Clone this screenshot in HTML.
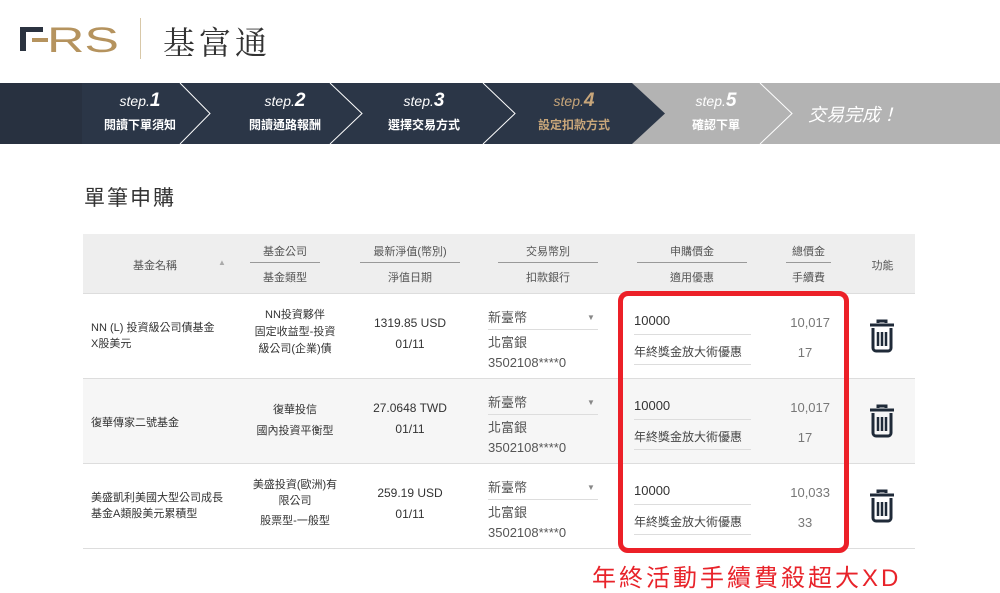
<!DOCTYPE html>
<html><head><meta charset="utf-8"><style>
*{margin:0;padding:0;box-sizing:border-box}
body{width:1000px;height:589px;background:#fff;font-family:"Liberation Sans","Noto Sans CJK TC",sans-serif;position:relative;overflow:hidden;color:#333}
.a{position:absolute}
.c{text-align:center}
.hd{font-size:11px;color:#555}
.cell{font-size:12px;color:#333}
.ln{position:absolute;height:1px;background:#999}
.st{position:absolute;top:90px;text-align:center;color:#fff}
.st i{font-family:"Liberation Sans",sans-serif;font-size:14px;display:block;line-height:22px}
.st i b{font-size:19px}
.st span{font-size:12px;font-weight:bold;display:block;line-height:26px}
</style></head><body>
<!-- logo -->
<svg class="a" style="left:18px;top:22px" width="105" height="34" viewBox="0 0 105 34">
<path d="M2 5h23v5H8v19H2z" fill="#2b3340"/>
<rect x="14" y="16" width="16" height="4" fill="#b5935e"/>
<text x="29" y="30" font-family="Liberation Sans" font-size="35" fill="#b5935e" textLength="72" lengthAdjust="spacingAndGlyphs">RS</text>
</svg>
<div class="a" style="left:140px;top:18px;width:1px;height:41px;background:#d8c8a8"></div>
<div class="a" style="left:163px;top:18px;font-size:32px;color:#333;font-family:'Liberation Serif','Noto Serif CJK SC',serif;letter-spacing:4px">基富通</div>
<!-- steps -->
<div class="a" style="left:0;top:83px;width:1000px;height:61px;background:#b3b3b3"></div>
<div class="a" style="left:0;top:83px;width:82px;height:61px;background:#283140"></div>
<svg class="a" style="left:0;top:83px" width="1000" height="61">
<polygon points="82,0 632,0 665,30.5 632,61 82,61" fill="#2b3647"/>
<polyline points="180,0 210,30.5 180,61" fill="none" stroke="#fff" stroke-width="1"/>
<polyline points="330,0 362,30.5 330,61" fill="none" stroke="#fff" stroke-width="1"/>
<polyline points="483,0 515,30.5 483,61" fill="none" stroke="#fff" stroke-width="1"/>
<polyline points="760,0 792,30.5 760,61" fill="none" stroke="#fff" stroke-width="1"/>
</svg>
<div class="st" style="left:65px;width:150px"><i>step.<b>1</b></i><span>閱讀下單須知</span></div>
<div class="st" style="left:210px;width:150px"><i>step.<b>2</b></i><span>閱讀通路報酬</span></div>
<div class="st" style="left:349px;width:150px"><i>step.<b>3</b></i><span>選擇交易方式</span></div>
<div class="st" style="left:499px;width:150px;color:#c8a67a"><i>step.<b>4</b></i><span>設定扣款方式</span></div>
<div class="st" style="left:641px;width:150px"><i>step.<b>5</b></i><span>確認下單</span></div>
<div class="a" style="left:808px;top:101px;font-size:18px;color:#fff;font-style:italic">交易完成！</div>
<!-- title -->
<div class="a" style="left:84px;top:182px;font-size:21px;color:#333;letter-spacing:2px">單筆申購</div>
<!-- table -->
<div class="a" style="left:83px;top:234px;width:832px;height:59px;background:#eee"></div>
<div class="a" style="left:83px;top:378px;width:832px;height:85px;background:#f6f6f6"></div>
<div class="a" style="left:83px;top:293px;width:832px;height:1px;background:#ddd"></div>
<div class="a" style="left:83px;top:378px;width:832px;height:1px;background:#ddd"></div>
<div class="a" style="left:83px;top:463px;width:832px;height:1px;background:#ddd"></div>
<div class="a" style="left:83px;top:548px;width:832px;height:1px;background:#ddd"></div>
<div class="a hd" style="left:133px;top:257px">基金名稱</div>
<div class="a" style="left:218px;top:258px;font-size:8px;color:#aaa">▲</div>
<div class="a hd c" style="left:250px;top:243px;width:70px">基金公司</div>
<div class="ln" style="top:262px;width:70px;left:250px"></div>
<div class="a hd c" style="left:250px;top:269px;width:70px">基金類型</div>
<div class="a hd c" style="left:360px;top:243px;width:100px">最新淨值(幣別)</div>
<div class="ln" style="left:360px;top:262px;width:100px"></div>
<div class="a hd c" style="left:360px;top:269px;width:100px">淨值日期</div>
<div class="a hd c" style="left:498px;top:243px;width:100px">交易幣別</div>
<div class="ln" style="left:498px;top:262px;width:100px"></div>
<div class="a hd c" style="left:498px;top:269px;width:100px">扣款銀行</div>
<div class="a hd c" style="left:637px;top:243px;width:110px">申購價金</div>
<div class="ln" style="left:637px;top:262px;width:110px"></div>
<div class="a hd c" style="left:637px;top:269px;width:110px">適用優惠</div>
<div class="a hd c" style="left:786px;top:243px;width:45px">總價金</div>
<div class="ln" style="left:786px;top:262px;width:45px"></div>
<div class="a hd c" style="left:786px;top:269px;width:45px">手續費</div>
<div class="a hd c" style="left:860px;top:257px;width:45px">功能</div>

<!-- rows -->
<div class="a cell" style="left:91px;top:320px;width:124px;font-size:11px;line-height:16px">NN (L) 投資級公司債基金X股美元</div>
<div class="a cell c" style="left:240px;top:306px;width:110px;font-size:11px;line-height:18px">NN投資夥伴<br><span style="line-height:17px;display:block">固定收益型-投資<br>級公司(企業)債</span></div>
<div class="a cell c" style="left:360px;top:313px;width:100px;line-height:21px">1319.85 USD<br>01/11</div>

<div class="a cell" style="left:91px;top:414px;font-size:11px">復華傳家二號基金</div>
<div class="a cell c" style="left:240px;top:400px;width:110px;font-size:11px;line-height:21px">復華投信<br>國內投資平衡型</div>
<div class="a cell c" style="left:360px;top:398px;width:100px;line-height:21px">27.0648 TWD<br>01/11</div>

<div class="a cell" style="left:91px;top:490px;width:133px;font-size:11px;line-height:16px">美盛凱利美國大型公司成長基金A類股美元累積型</div>
<div class="a cell c" style="left:240px;top:477px;width:110px;font-size:11px;line-height:16px">美盛投資(歐洲)有<br>限公司<br><span style="line-height:24px">股票型-一般型</span></div>
<div class="a cell c" style="left:360px;top:483px;width:100px;line-height:21px">259.19 USD<br>01/11</div>

<!-- currency/bank -->
<div class="a" style="left:488px;top:307px;font-size:13px;color:#555">新臺幣</div>
<div class="a" style="left:587px;top:313px;font-size:8px;color:#888">▼</div>
<div class="a" style="left:488px;top:329px;width:110px;height:1px;background:#ddd"></div>
<div class="a" style="left:488px;top:333px;font-size:13px;color:#555;line-height:20px">北富銀<br>3502108****0</div>
<div class="a" style="left:488px;top:392px;font-size:13px;color:#555">新臺幣</div>
<div class="a" style="left:587px;top:398px;font-size:8px;color:#888">▼</div>
<div class="a" style="left:488px;top:414px;width:110px;height:1px;background:#ddd"></div>
<div class="a" style="left:488px;top:418px;font-size:13px;color:#555;line-height:20px">北富銀<br>3502108****0</div>
<div class="a" style="left:488px;top:477px;font-size:13px;color:#555">新臺幣</div>
<div class="a" style="left:587px;top:483px;font-size:8px;color:#888">▼</div>
<div class="a" style="left:488px;top:499px;width:110px;height:1px;background:#ddd"></div>
<div class="a" style="left:488px;top:503px;font-size:13px;color:#555;line-height:20px">北富銀<br>3502108****0</div>

<!-- price -->
<div class="a" style="left:634px;top:313px;font-size:13px;color:#333">10000</div>
<div class="a" style="left:634px;top:334px;width:117px;height:1px;background:#ddd"></div>
<div class="a" style="left:634px;top:343px;font-size:12px;color:#444;white-space:nowrap">年終獎金放大術優惠</div>
<div class="a" style="left:634px;top:364px;width:117px;height:1px;background:#ddd"></div>
<div class="a" style="left:780px;top:315px;width:50px;text-align:right;font-size:13px;color:#777">10,017</div>
<div class="a" style="left:790px;top:345px;width:30px;text-align:center;font-size:13px;color:#777">17</div>

<div class="a" style="left:634px;top:398px;font-size:13px;color:#333">10000</div>
<div class="a" style="left:634px;top:419px;width:117px;height:1px;background:#ddd"></div>
<div class="a" style="left:634px;top:428px;font-size:12px;color:#444;white-space:nowrap">年終獎金放大術優惠</div>
<div class="a" style="left:634px;top:449px;width:117px;height:1px;background:#ddd"></div>
<div class="a" style="left:780px;top:400px;width:50px;text-align:right;font-size:13px;color:#777">10,017</div>
<div class="a" style="left:790px;top:430px;width:30px;text-align:center;font-size:13px;color:#777">17</div>

<div class="a" style="left:634px;top:483px;font-size:13px;color:#333">10000</div>
<div class="a" style="left:634px;top:504px;width:117px;height:1px;background:#ddd"></div>
<div class="a" style="left:634px;top:513px;font-size:12px;color:#444;white-space:nowrap">年終獎金放大術優惠</div>
<div class="a" style="left:634px;top:534px;width:117px;height:1px;background:#ddd"></div>
<div class="a" style="left:780px;top:485px;width:50px;text-align:right;font-size:13px;color:#777">10,033</div>
<div class="a" style="left:790px;top:515px;width:30px;text-align:center;font-size:13px;color:#777">33</div>

<!-- trash icons -->
<svg class="a" style="left:868px;top:319px" width="28" height="34" viewBox="0 0 28 34"><g fill="none" stroke="#1f2a38" stroke-width="3"><path d="M10 4V2h8v2"/><path d="M2 6h24"/><path d="M5 9v20a3 3 0 0 0 3 3h12a3 3 0 0 0 3-3V9"/><path d="M10 13v14M14 13v14M18 13v14" stroke-width="2.5"/></g></svg>
<svg class="a" style="left:868px;top:404px" width="28" height="34" viewBox="0 0 28 34"><g fill="none" stroke="#1f2a38" stroke-width="3"><path d="M10 4V2h8v2"/><path d="M2 6h24"/><path d="M5 9v20a3 3 0 0 0 3 3h12a3 3 0 0 0 3-3V9"/><path d="M10 13v14M14 13v14M18 13v14" stroke-width="2.5"/></g></svg>
<svg class="a" style="left:868px;top:489px" width="28" height="34" viewBox="0 0 28 34"><g fill="none" stroke="#1f2a38" stroke-width="3"><path d="M10 4V2h8v2"/><path d="M2 6h24"/><path d="M5 9v20a3 3 0 0 0 3 3h12a3 3 0 0 0 3-3V9"/><path d="M10 13v14M14 13v14M18 13v14" stroke-width="2.5"/></g></svg>

<!-- red box -->
<div class="a" style="left:618px;top:291px;width:231px;height:262px;border:5px solid #ec2028;border-radius:10px"></div>
<div class="a" style="left:592px;top:558px;font-size:24px;color:#e8232a;letter-spacing:3px;white-space:nowrap">年終活動手續費殺超大XD</div>
</body></html>
